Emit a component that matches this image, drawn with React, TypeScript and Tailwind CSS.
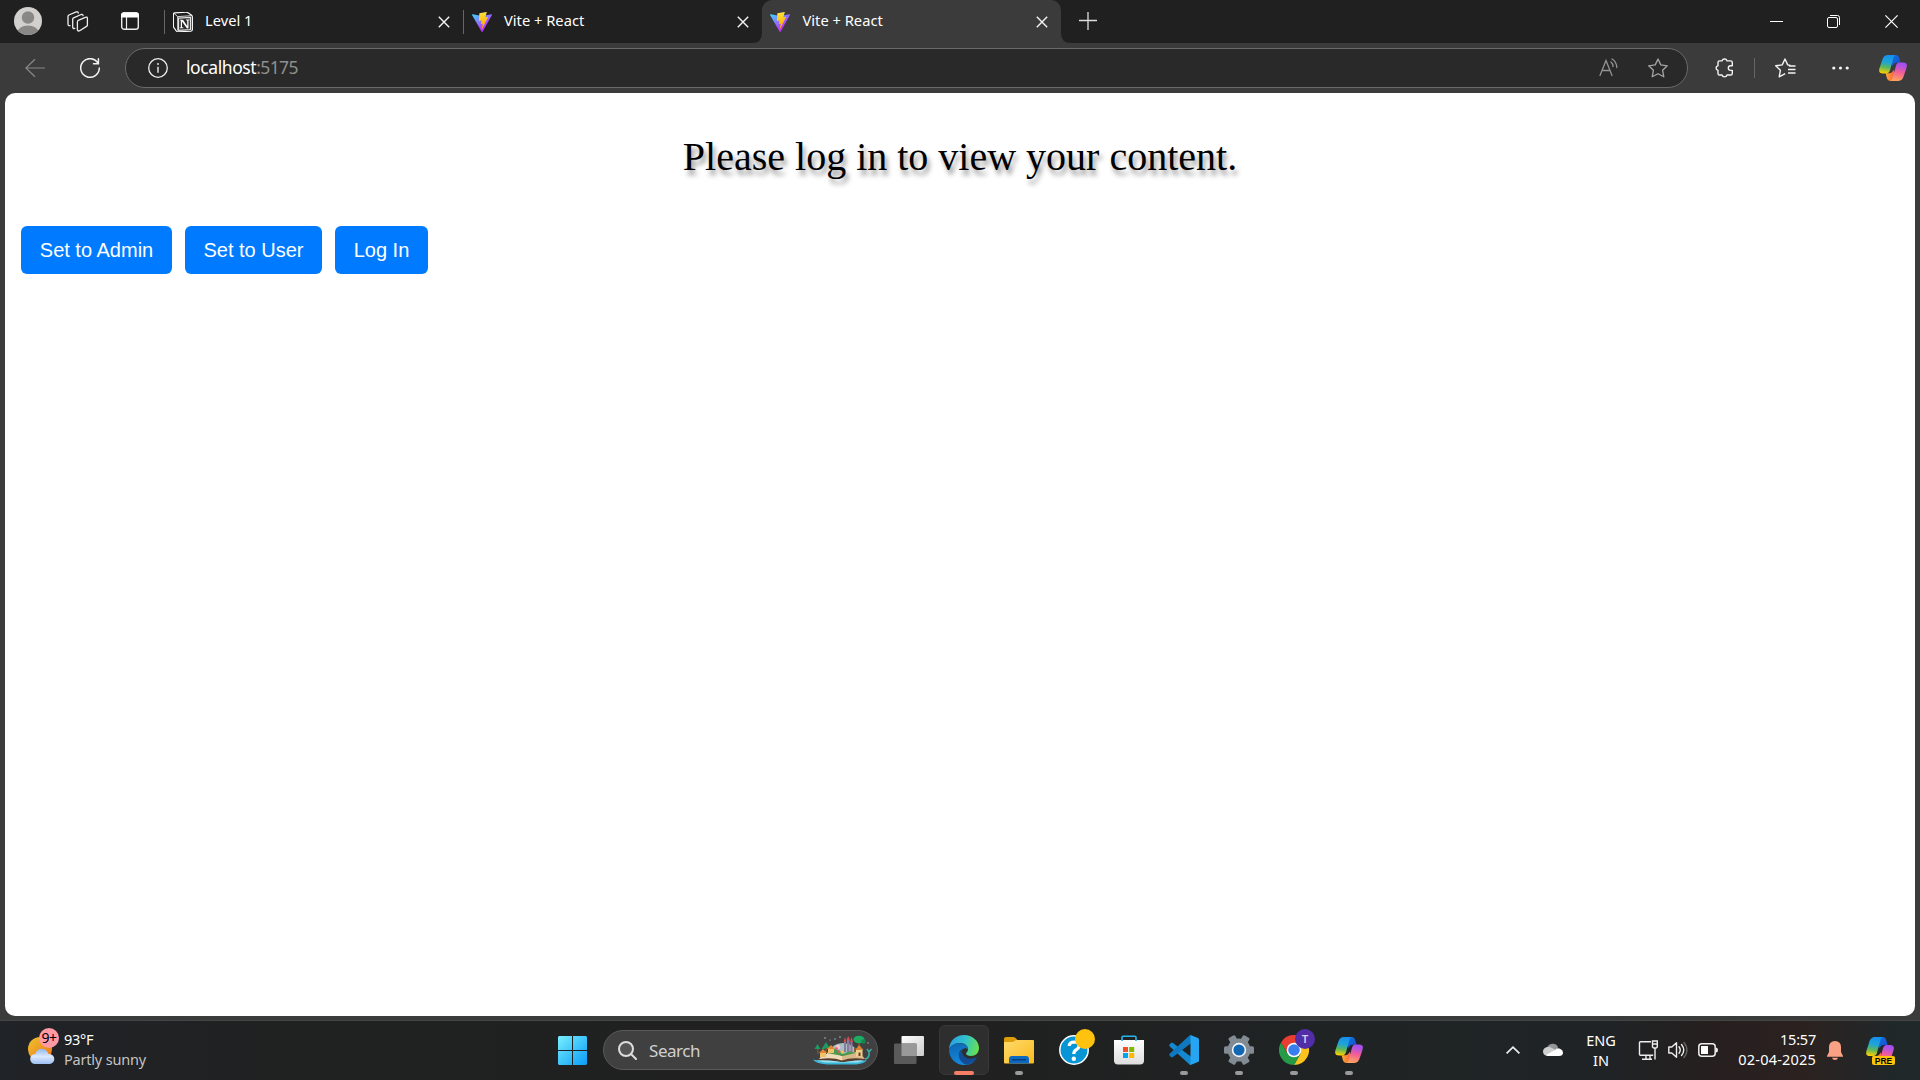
import React from "react";

const UI = "font-['Noto_Sans','Open_Sans',sans-serif]";

function ViteLogo({ id }: { id: string }) {
  return (
    <svg className="block h-5 w-5 shrink-0" viewBox="0 0 256 257" preserveAspectRatio="none">
      <defs>
        <linearGradient id={`${id}a`} x1="-.828%" x2="57.636%" y1="7.652%" y2="78.411%">
          <stop offset="0%" stopColor="#41D1FF" />
          <stop offset="100%" stopColor="#BD34FE" />
        </linearGradient>
        <linearGradient id={`${id}b`} x1="43.376%" x2="50.316%" y1="2.242%" y2="89.03%">
          <stop offset="0%" stopColor="#FFEA83" />
          <stop offset="8.333%" stopColor="#FFDD35" />
          <stop offset="100%" stopColor="#FFA800" />
        </linearGradient>
      </defs>
      <path fill={`url(#${id}a)`} d="M255.153 37.938 134.897 252.976c-2.483 4.44-8.862 4.466-11.382.048L.875 37.958c-2.746-4.814 1.371-10.646 6.827-9.67l120.385 21.517a6.537 6.537 0 0 0 2.322-.004l117.867-21.483c5.438-.991 9.574 4.796 6.877 9.62Z" />
      <path fill={`url(#${id}b)`} d="M185.432.063 96.44 17.501a3.268 3.268 0 0 0-2.634 3.014l-5.474 92.456a3.268 3.268 0 0 0 3.997 3.378l24.777-5.718c2.318-.535 4.413 1.507 3.936 3.838l-7.361 36.047c-.495 2.426 1.782 4.5 4.151 3.78l15.304-4.649c2.372-.72 4.652 1.36 4.15 3.788l-11.698 56.621c-.732 3.542 3.979 5.473 5.943 2.437l1.313-2.028 72.516-144.72c1.215-2.423-.88-5.186-3.54-4.672l-25.505 4.922c-2.396.462-4.435-1.77-3.759-4.114l16.646-57.705c.677-2.35-1.37-4.583-3.769-4.113Z" />
    </svg>
  );
}

function Copilot({ id, className }: { id: string; className: string }) {
  return (
    <svg className={className} viewBox="0 0 28 26" preserveAspectRatio="none">
      <defs>
        <linearGradient id={`${id}l`} x1="0.55" y1="0" x2="0.4" y2="1">
          <stop offset="0" stopColor="#1590ee" />
          <stop offset=".4" stopColor="#1fa5d6" />
          <stop offset=".68" stopColor="#5cb85a" />
          <stop offset="1" stopColor="#ffd000" />
        </linearGradient>
        <linearGradient id={`${id}r`} x1="0.6" y1="0" x2="0.4" y2="1">
          <stop offset="0" stopColor="#a64df0" />
          <stop offset=".2" stopColor="#b453dd" />
          <stop offset=".5" stopColor="#f25c98" />
          <stop offset="1" stopColor="#ffa45e" />
        </linearGradient>
        <linearGradient id={`${id}t`} x1="0" y1="0" x2="1" y2="1">
          <stop offset="0" stopColor="#0b7be0" />
          <stop offset="1" stopColor="#1c48cf" />
        </linearGradient>
        <linearGradient id={`${id}b`} x1="0" y1="0" x2="1" y2="0">
          <stop offset="0" stopColor="#ffab36" />
          <stop offset="1" stopColor="#ee4a3e" />
        </linearGradient>
      </defs>
      <path fill={`url(#${id}t)`} d="M9 0h7.6c2 0 3 1.1 3.6 3l1.3 4.7h-3.4c-2.7 0-3.8 1.2-4.4 3.4L9 0Z" />
      <path fill={`url(#${id}b)`} d="M19 26h-7.500c-2.100 0-3.200-1.200-3.700-3.200L6.600 18.300h3.300c2.600 0 3.700-1.200 4.500-3.600L19 26Z" />
      <path fill={`url(#${id}l)`} d="M16.500 0H8.600C5.600 0 4 2.200 2.900 6L.7 12.500C-.7 16.800.500 18.400 4 18.400h3.300c2 0 3.100-1.200 3.700-3.200l3.200-11.300C14.700 2 15.100.500 16.500 0Z" />
      <path fill={`url(#${id}r)`} d="M11.600 26h7.800c3 0 4.600-2.200 5.700-6l2.200-6.500c1.400-4.300.2-5.900-3.300-5.900h-3.300c-2 0-3.100 1.200-3.700 3.200l-3.200 11.300c-.500 1.900-.900 3.400-2.200 3.900Z" />
    </svg>
  );
}

function Close({ className }: { className: string }) {
  return (
    <svg className={className} viewBox="0 0 12 12" fill="none" stroke="#f5f5f5" strokeWidth="1.4">
      <path d="m.8.8 10.400 10.400M11.200.8.8 11.200" />
    </svg>
  );
}

function TabStrip() {
  return (
    <header className={`flex h-[43px] items-start bg-[#202020] text-white ${UI}`}>
      <svg className="mt-[7px] ml-3.5 h-7 w-7 shrink-0" viewBox="0 0 28 28">
        <defs><clipPath id="av"><circle cx="14" cy="14" r="14" /></clipPath></defs>
        <circle cx="14" cy="14" r="14" fill="#d2d0ce" />
        <g clipPath="url(#av)" fill="#8a8886"><circle cx="14" cy="10.500" r="6.200" /><ellipse cx="14" cy="25.500" rx="10.500" ry="7" /></g>
      </svg>
      <svg className="mt-[11px] ml-[25px] h-[21px] w-[22px] shrink-0" viewBox="0 0 22 21" fill="none" stroke="#eee" strokeWidth="1.3" strokeLinejoin="round" strokeLinecap="round">
        <path d="M11.300 9.300 18.300 6.300q2-.7 2.100 1v6.600q0 1-.9 1.500l-6.800 4.300q-2.200.900-2.300-.9v-7.900q0-1 .9-1.600Z" />
        <path d="M7.800 17.400q-2 .5-2.100-1.200V8.300q0-1 .9-1.500l7.500-3.300q1.800-.5 2 1.200" />
        <path d="M3 14.600q-1.900.3-2-1.300V5.500q0-1 .9-1.500l7.300-3.100q1.700-.5 2.100 1.100" />
      </svg>
      <svg className="mt-3 ml-8 h-[18px] w-[18px] shrink-0" viewBox="0 0 18 18">
        <rect x=".7" y=".9" width="16.600" height="16.400" rx="2.600" fill="none" stroke="#eee" strokeWidth="1.400" />
        <path d="M0 3.500Q0 .2 3 .2h12q3 0 3 3.300v2H0Z" fill="#fff" />
        <path d="M5.500 5v12" stroke="#eee" strokeWidth="1.200" />
      </svg>
      <div className="mt-2.5 ml-[25px] h-6 w-px shrink-0 bg-[#666]" />
      <div className="flex w-[298px] shrink-0 items-start">
        <svg className="mt-3 ml-2 h-5 w-5 shrink-0" viewBox="0 0 20 20">
          <path d="M1.700.9 13 .3q1.400-.1 2.400.7l3.200 2.300q.8.600.8 1.600v12.600q0 1.500-1.500 1.700l-12.800.6q-1 0-1.700-.7L.9 15.600q-.5-.7-.5-1.500V2.300Q.4 1 1.700.9Z" fill="#202020" stroke="#fff" strokeWidth="1.100" />
          <path d="m1 1.400 3.700 3.200v14M4.700 4.600l14-.9" fill="none" stroke="#fff" strokeWidth=".8" />
          <path d="m5.500 6.100 12-.7v12.200l-12 .7Z" fill="#2a2a2a" stroke="#e4e4e4" strokeWidth="1.300" />
          <path d="M7 7.700h3l4.200 6.300V8.500l-1.200-.3v-.7h3.500v.7l-1 .3v7.700l-1.500.2L9 9.500v5.800l1.400.3v.7H6.800v-.7l1-.3V8.600L7 8.400Z" fill="#fff" />
        </svg>
        <span className="mt-2 ml-[12px] w-[233px] text-[14.700px] leading-6 whitespace-nowrap">Level 1</span>
        <Close className="mt-4 h-3 w-3 shrink-0" />
      </div>
      <div className="mt-2.5 h-6 w-px shrink-0 bg-[#666]" />
      <div className="relative flex h-[43px] w-[298px] shrink-0 items-start">
        <div className="mt-3 ml-2"><ViteLogo id="v1" /></div>
        <span className="mt-2 ml-[12px] w-[233px] text-[14.700px] leading-6 whitespace-nowrap">Vite + React</span>
        <Close className="mt-4 h-3 w-3 shrink-0" />
        <svg className="absolute right-0 bottom-0 h-2.5 w-2.5" viewBox="0 0 10 10"><path d="M10 0v10H0Q10 10 10 0Z" fill="#3b3b3b" /></svg>
      </div>
      <div className="flex h-[43px] w-[299px] shrink-0 items-start rounded-t-[10px] bg-[#3b3b3b]">
        <div className="mt-3 ml-2"><ViteLogo id="v2" /></div>
        <span className="mt-2 ml-[12.500px] w-[233.500px] text-[14.700px] leading-6 whitespace-nowrap">Vite + React</span>
        <Close className="mt-4 h-3 w-3 shrink-0" />
      </div>
      <svg className="h-2.5 w-2.5 shrink-0 self-end" viewBox="0 0 10 10"><path d="M0 0v10h10Q0 10 0 0Z" fill="#3b3b3b" /></svg>
      <svg className="mt-3 ml-2 h-[18px] w-[18px] shrink-0" viewBox="0 0 18 18" stroke="#ddd" strokeWidth="1.300"><path d="M9 0v18M0 8.500h18" /></svg>
      <svg className="mt-[21px] ml-auto h-px w-[13px]" viewBox="0 0 13 1"><path d="M0 .5h13" stroke="#fff" /></svg>
      <svg className="mt-[15px] ml-11 h-[13px] w-[13px]" viewBox="0 0 13 13" fill="none" stroke="#fff"><rect x=".5" y="2.500" width="10" height="10" rx="1.500" /><path d="M3 .5h7.500q2 0 2 2V10" /></svg>
      <svg className="mt-[15px] mr-[22px] ml-[45px] h-[13px] w-[13px]" viewBox="0 0 13 13" stroke="#fff" strokeWidth="1.200"><path d="m.4.4 12.200 12.200M12.600.4.4 12.600" /></svg>
    </header>
  );
}

function Toolbar() {
  return (
    <div className={`flex h-[50px] items-center bg-[#3b3b3b] ${UI}`}>
      <svg className="-mt-px ml-[25px] h-5 w-5 shrink-0" viewBox="0 0 20 20" fill="none" stroke="#888" strokeWidth="1.200"><path d="M20 10H.9M10 1.200.9 10l9.100 8.800" /></svg>
      <svg className="ml-[35px] h-5 w-5 shrink-0" viewBox="0 0 20 20" fill="none" stroke="#f3f3f3" strokeWidth="1.500" strokeLinecap="round"><path d="M13.500 5.700h4.900V.8M18 5.200A9.300 9.300 0 1 0 19.300 10" /></svg>
      <div className="ml-[25px] flex h-10 w-[1563px] shrink-0 items-center rounded-full border border-[#6a6a6a] bg-[#292929]">
        <svg className="ml-[22px] h-5 w-5 shrink-0" viewBox="0 0 20 20" fill="none" stroke="#eee" strokeWidth="1.300"><circle cx="10" cy="10" r="9.300" /><path d="M10 8.700v6" strokeWidth="1.400" /><circle cx="10" cy="6" r=".9" fill="#eee" stroke="none" /></svg>
        <span className="ml-[18px] -mt-[3px] text-[17.500px] leading-6 tracking-[-0.42px] whitespace-nowrap text-white">localhost<span className="tracking-[-0.6px] text-[#8f8f8f]">:5175</span></span>
        <svg className="ml-auto h-5 w-5 shrink-0" viewBox="0 0 20 20" fill="none" stroke="#939393" strokeWidth="1.300" strokeLinecap="round"><path d="m1 17.500 6-15 6 15M3 12.500h8M12 4q2 1.500 2 4.500M13 1q4.500 2.500 4.800 8.500" /></svg>
        <svg className="mr-[19px] ml-[29px] h-5 w-5 shrink-0" viewBox="0 0 20 20" fill="none" stroke="#a5a5a5" strokeWidth="1.300" strokeLinejoin="round"><path d="m10 1 2.800 5.900 6.500.9-4.700 4.500 1.200 6.500-5.800-3.100-5.800 3.100 1.200-6.500L.7 7.800l6.500-.9Z" /></svg>
      </div>
      <svg className="ml-[27px] h-5 w-[19px] shrink-0" viewBox="0 0 19 20" fill="none" stroke="#f3f3f3" strokeWidth="1.400" strokeLinejoin="round"><path d="M7 2.900a2.600 2.600 0 0 1 5 0h3.700q1.600 0 1.600 1.600v3.300h-1.700a2.300 2.300 0 0 0 0 4.600h1.700v3q0 1.600-1.600 1.600H12a2.600 2.600 0 0 1-5 0H4.500Q3 17 3 15.400v-3a2.400 2.400 0 0 1 0-4.700V4.500q0-1.600 1.500-1.600Z" /></svg>
      <div className="ml-[20px] h-5 w-px shrink-0 bg-[#666]" />
      <svg className="ml-[20px] h-5 w-[21px] shrink-0" viewBox="0 0 21 20" fill="none" stroke="#f3f3f3" strokeWidth="1.400" strokeLinejoin="round"><path d="M15.500 7.500 12.700 6.900 10 1 7.200 6.900l-6.500.9 4.700 4.500-1.200 6.500 6-3.200M14 8h6.500M13 11.500h7.500M13 15h7.500" /></svg>
      <svg className="ml-9 h-1 w-[17px] shrink-0" viewBox="0 0 17 4" fill="#f3f3f3"><circle cx="1.800" cy="2" r="1.600" /><circle cx="8.500" cy="2" r="1.600" /><circle cx="15.200" cy="2" r="1.600" /></svg>
      <Copilot id="c1" className="ml-[30px] h-[26px] w-7 shrink-0" />
    </div>
  );
}

function Page() {
  const btn = "h-12 rounded-[6px] bg-[#007bff] font-['Liberation_Sans',Arial,sans-serif] text-[20px] leading-none text-white";
  return (
    <main className="mx-[5px] h-[923px] rounded-[10px] bg-white">
      <h1 className="pt-[41px] text-center font-['Liberation_Serif',serif] text-[40px] leading-[46px] font-normal text-black [text-shadow:2.5px_5px_5px_rgba(0,0,0,0.42)]">
        Please log in to view your content.
      </h1>
      <div className="mt-[46px] ml-4 flex gap-[13px]">
        <button className={`${btn} w-[151px]`}>Set to Admin</button>
        <button className={`${btn} w-[137px]`}>Set to User</button>
        <button className={`${btn} w-[93px]`}>Log In</button>
      </div>
    </main>
  );
}

function AppSlot({ children, state }: { children: React.ReactNode; state?: "active" | "open" }) {
  return (
    <div className={`relative flex h-[50px] w-[50px] shrink-0 items-center justify-center ${state === "active" ? "rounded-md border border-[#383838] bg-[#2e2e2e]" : ""}`}>
      {children}
      {state === "active" && <div className="absolute -bottom-px h-1 w-5 rounded-full bg-[#f47f66]" />}
      {state === "open" && <div className="absolute bottom-0 h-1 w-2 rounded-full bg-[#9a9a9a]" />}
    </div>
  );
}

function StoryBook() {
  return (
    <svg className="h-[30px] w-[60px] shrink-0" viewBox="0 0 60 30">
      <path d="M0 24.500q8 2 30 2T54 24.500q-1 4-11 5H14Q2 28.500 0 24.500Z" fill="#39b6d9" />
      <path d="M3 25.500q10-1 22 1h10q12-2 16-1l-6 2H12Z" fill="#9de3ef" />
      <path d="M16 18q3-10 14-10t15 10q-8 0-15 2-7-3-14-2Z" fill="#a9bfc6" />
      <path d="m10 19-5 6q14-1 23 2h3q10-3 21-2l-5-6q-10-1-18 3-8-4-19-3Z" fill="#5b3c2c" />
      <path d="m11 18-5 6q14-2 23 1.500V21q-8-4-18-3Z" fill="#f0dcb8" />
      <path d="m47 18 5 6q-14-2-23 1.500V21q8-4 18-3Z" fill="#d9b98b" />
      <path d="M14 18q3-5 8-4t8 5l7-3 6 2-13 3Z" fill="#4c9a4e" />
      <path d="M31 7h2v10h-2zM34 5h2.500v12H34zM37.500 7h2v10h-2z" fill="#8c7a9c" />
      <path d="m30.500 7 1.500-5 1.500 5ZM33.500 5l1.700-4 1.800 4ZM37 7l1.500-5L40 7Z" fill="#d64a55" />
      <path d="m1.500 14 3-5 3 5ZM8.500 14l4.500-7 4.500 7Z" fill="#1c9a62" /><path d="M4 14h1.500v5H4zM12 13h2v6h-2z" fill="#785037" />
      <path d="M45 6h2v7h-2z" fill="#7a4d2d" /><ellipse cx="46" cy="4.500" rx="5.500" ry="3.800" fill="#1faa63" /><circle cx="50.500" cy="6.500" r="2.200" fill="#14864f" />
      <path d="M43 14h6.500v7.500H43z" fill="#efcf8c" /><path d="m42 15 4.200-5 4.300 5Z" fill="#d78438" /><path d="M45.500 17.500h2V21h-2z" fill="#6e3d23" />
      <path d="M7 18h6v4H7zM15 14h6v4h-6z" fill="#f0c269" /><path d="m6 18 4-4 4 4ZM14 14l4-4 4 4Z" fill="#df8a35" />
      <path d="M41 13h2v4h-2z" fill="#8c5b30" />
      <circle cx="25" cy="12" r="2.300" fill="#f7c7d0" /><circle cx="23.500" cy="13.500" r="1.300" fill="#e65a78" /><circle cx="29" cy="17" r="1.500" fill="#f4c64f" /><circle cx="26" cy="16.500" r="1.200" fill="#e65a68" />
      <path d="M52 24q5-1 4-7m-2-3 2 3 2.500-3" fill="none" stroke="#35b1a9" strokeWidth="1.500" />
      <g fill="#9bc3d1"><circle cx="12" cy="3" r=".8" /><circle cx="17" cy="5" r=".6" /><circle cx="22" cy="4" r=".7" /><circle cx="27" cy="2" r=".8" /><circle cx="55" cy="8" r=".7" /></g>
    </svg>
  );
}

function Gear() {
  return (
    <svg className="h-[30px] w-[30px]" viewBox="0 0 30 30">
      <g fill="#828b93">
        <circle cx="15" cy="15" r="11.500" />
        <rect x="0" y="11.200" width="30" height="7.600" rx="1.600" />
        <rect x="-.5" y="11.200" width="31" height="7.600" rx="1.600" transform="rotate(60 15 15)" />
        <rect x="-.5" y="11.200" width="31" height="7.600" rx="1.600" transform="rotate(120 15 15)" />
      </g>
      <circle cx="15" cy="15" r="7.200" fill="#f4f6f8" /><circle cx="15" cy="15" r="5.600" fill="#1068b5" />
    </svg>
  );
}

function Taskbar() {
  return (
    <footer className={`flex h-[59px] items-start bg-[linear-gradient(90deg,#202327_0%,#202121_14%,#202020_50%,#1f2425_76%,#1f2325_84%,#261f1f_89%,#2b2220_94%,#20282a_99%)] text-white ${UI}`}>
      <div className="relative mt-4 ml-7 h-7 w-7 shrink-0">
        <svg className="h-7 w-7" viewBox="0 0 28 28">
          <defs><linearGradient id="sun" x1="0" y1="0" x2="1" y2="1"><stop stopColor="#ecc331" /><stop offset="1" stopColor="#f27314" /></linearGradient><linearGradient id="cl" x1="0" y1="0" x2="0" y2="1"><stop stopColor="#8fb8f0" /><stop offset=".5" stopColor="#dce9fd" /><stop offset="1" stopColor="#9dbff2" /></linearGradient></defs>
          <circle cx="12" cy="12" r="12" fill="url(#sun)" /><path d="M7 27a5 5 0 0 1 .4-10q2-6 7.600-5 4 .8 5.500 5a5 5 0 1 1 1.500 10Z" fill="url(#cl)" />
        </svg>
        <div className="absolute -top-[9px] left-[11px] flex h-5 w-5 items-center justify-center rounded-full bg-[#ff99a4] text-[14px] leading-none tracking-[-0.4px] text-black">9+</div>
      </div>
      <div className="mt-2 ml-2 w-[494px] shrink-0 text-[14.500px] leading-5 whitespace-nowrap"><div className="tracking-[-0.3px]">93°F</div><div className="tracking-[-0.2px] text-[#c4c4c4]">Partly sunny</div></div>
      <svg className="mt-[15px] h-[29px] w-[29px] shrink-0" viewBox="0 0 29 29"><defs><linearGradient id="win" gradientUnits="userSpaceOnUse" x1="0" y1="0" x2="29" y2="29"><stop stopColor="#76effd" /><stop offset="1" stopColor="#0a9cf8" /></linearGradient></defs><path d="M1 0h13v14H0V1ZM15 0h13l1 1v13H15ZM0 15h14v14H1l-1-1ZM15 15h14v13l-1 1H15Z" fill="url(#win)" /></svg>
      <div className="mt-[9px] ml-4 flex h-10 w-[275px] shrink-0 items-center rounded-full border border-[#595959] bg-[#404040]">
        <svg className="ml-3.5 h-[19px] w-[19px] shrink-0" viewBox="0 0 19 19" fill="none" stroke="#ddd" strokeWidth="2"><circle cx="8" cy="8" r="7" fill="#555" /><path d="m13 13 5 5" strokeLinecap="round" /></svg>
        <span className="mt-px ml-3 text-[17px] leading-6 tracking-[-0.45px] text-[#d0d0d0]">Search</span>
        <div className="mr-[4px] ml-auto"><StoryBook /></div>
      </div>
      <div className="mt-1 ml-[6px] flex gap-[5px]">
        <AppSlot><svg className="h-7 w-[30px]" viewBox="0 0 30 28"><defs><linearGradient id="tv" x1="0" y1="0" x2="1" y2="1"><stop stopColor="#fff" /><stop offset="1" stopColor="#ccc" /></linearGradient></defs><rect x="7.500" width="22.500" height="20" rx="1" fill="url(#tv)" /><rect y="7.500" width="22.500" height="20.500" rx="1" fill="#5a5a5a" /><path d="M7.500 7.500h15V20h-15Z" fill="#999" /></svg></AppSlot>
        <AppSlot state="active">
          <svg className="h-[30px] w-[30px]" viewBox="0 0 30 30">
            <defs><linearGradient id="e1" x1="0" y1=".3" x2="1" y2=".5"><stop stopColor="#2b9de0" /><stop offset=".5" stopColor="#2fc2cf" /><stop offset="1" stopColor="#68e04e" /></linearGradient><linearGradient id="e2" x1=".2" y1="0" x2=".6" y2="1"><stop stopColor="#0d69b5" /><stop offset="1" stopColor="#168be0" /></linearGradient></defs>
            <path d="M0 14C.5 5.500 7 0 15 0c8.500 0 15 6 15 13 0 5-3.500 8-8 8-3 0-5-1-5-2.500 0-1 2-1.500 2-4.500 0-3-3-6-8-6C6 8 1.500 11 0 14Z" fill="url(#e1)" />
            <path d="M0 14.500C2 10 6 8.300 10.500 8.300c5 0 8.500 2.700 8.500 6.200-2-2.500-7-1.500-7 3.500 0 5 4 9 9 9 2 0 3.500-.5 4.500-1C22.500 29 19 30 15 30 6.500 30 0 23 0 14.500Z" fill="url(#e2)" />
            <path d="M12.700 14C8 17 8.500 26 17 29.800c4-.4 8.500-3 10.700-6.600.4-.8-.2-.9-.8-.6C20 26 12 22 12.700 14Z" fill="#124c96" />
          </svg>
        </AppSlot>
        <AppSlot state="open"><svg className="h-[27px] w-[30px]" viewBox="0 0 30 27"><defs><linearGradient id="fo" x1="0" y1="0" x2="1" y2="1"><stop stopColor="#ffdb6b" /><stop offset="1" stopColor="#f9b91e" /></linearGradient></defs><path d="M0 2Q0 0 2 0h7q1.500 0 2.500 1L14 3.500V9H0Z" fill="#dd9d08" /><path d="M0 5h9l3-2h17q1 0 1 1v21.500q0 1-1 1H1q-1 0-1-1Z" fill="url(#fo)" /><path d="M5 26.500V22q0-3 3-3h14q3 0 3 3v4.500Z" fill="#0c69c0" /><path d="M8.500 22.800h13" stroke="#063f80" strokeWidth="1.500" strokeLinecap="round" /></svg></AppSlot>
        <AppSlot><svg className="h-[30px] w-[30px]" viewBox="0 0 30 30"><circle cx="15" cy="15" r="14.200" fill="#0795d6" stroke="#fff" strokeWidth="1.500" /><path d="M10.200 11q.3-4 5-4 5 .2 4.800 4.200-.2 2.200-2.600 3.500-2.600 1.500-2.600 4.300" fill="none" stroke="#fff" strokeWidth="3.200" /><circle cx="14.800" cy="23.800" r="2.200" fill="#fff" /></svg><div className="absolute top-1 left-[26px] h-5 w-5 rounded-full bg-[#ffc20e]" /></AppSlot>
        <AppSlot><svg className="h-[30px] w-[30px]" viewBox="0 0 30 30"><defs><linearGradient id="st" x1="0" y1="0" x2="0" y2="1"><stop stopColor="#fff" /><stop offset="1" stopColor="#ddd" /></linearGradient></defs><path d="M0 5h30v20.500q0 4-4 4H4q-4 0-4-4Z" fill="url(#st)" /><path d="M8 6V2.300Q8 1.200 9.200 1.200h11.600q1.200 0 1.200 1.100V6" fill="none" stroke="#27b5ed" strokeWidth="1.600" /><path d="M9 12h5v5H9z" fill="#f25022" /><path d="M15.200 12h5v5h-5z" fill="#7fba00" /><path d="M9 18h5v5H9z" fill="#00a4ef" /><path d="M15.200 18h5v5h-5z" fill="#ffb900" /></svg></AppSlot>
        <AppSlot state="open"><svg className="h-[30px] w-[30px]" viewBox="0 0 30 30"><path d="M22 30q-1 0-1.500-.5L.8 11.500Q-.3 10.300.8 9.200L2 8q1-.8 2 0l18 13.700Z" fill="#1489d1" /><path d="M22 0q-1 0-1.500.5L.8 18.500q-1.100 1.200 0 2.300L2 22q1 .8 2 0L22 8.300Z" fill="#0f78c0" /><path d="m21.500 0 7.500 3q1 .5 1 1.500v21q0 1-1 1.500l-7.500 3Z" fill="#26a5f2" /></svg></AppSlot>
        <AppSlot state="open"><Gear /></AppSlot>
        <AppSlot state="open"><svg className="h-[30px] w-[30px]" viewBox="0 0 30 30"><path d="M2 7.500A15 15 0 0 1 28 7.500H15L8.500 18.800Z" fill="#e93d32" /><path d="M28 7.500A15 15 0 0 1 15 30l6.500-11.300L15 7.500Z" fill="#fcc31e" /><path d="M2 7.500A15 15 0 0 0 15 30l6.500-11.200-13 0Z" fill="#259b48" /><circle cx="15" cy="15" r="7.300" fill="#fff" /><circle cx="15" cy="15" r="5.800" fill="#397ef0" /></svg><div className="absolute top-1 left-[26px] flex h-5 w-5 items-center justify-center rounded-full bg-[#512da8] text-[11.500px] leading-none font-semibold text-[#d5c8f2]">T</div></AppSlot>
        <AppSlot state="open"><Copilot id="c2" className="h-[26px] w-7" /></AppSlot>
      </div>
      <svg className="mt-[25px] ml-[132px] h-2 w-3.5 shrink-0" viewBox="0 0 14 8" fill="none" stroke="#eee" strokeWidth="1.700"><path d="m.6 7.400 6.400-6.200 6.400 6.200" /></svg>
      <svg className="mt-[22px] ml-[23px] h-[13px] w-5 shrink-0" viewBox="0 0 20 13"><path d="M4 5a6 6 0 0 1 11-1l-2 4H3Z" fill="#969696" /><path d="M4 4q3-.5 5 1l5 3-8 5H4Q0 12 0 8.500T4 4Z" fill="#cfcfcf" /><path d="m3 12 9-5q2-2.500 5-1.300 3 1.300 3 3.800 0 3.500-4 3.500H5Z" fill="#fff" /></svg>
      <div className="mt-[9px] ml-[22px] w-8 shrink-0 text-center text-[14.500px] leading-5"><div>ENG</div><div>IN</div></div>
      <svg className="mt-[19px] ml-[21px] h-5 w-5 shrink-0" viewBox="0 0 20 20" fill="none" stroke="#eee" strokeWidth="1.400"><path d="M13 1.700H2.500q-1 0-1 1v11.600q0 1 1 1h12.700M8 15.300v4M12 15.300v4M4 19.300h10M14.500 1h4.800v6l-1.200 1h-2.400l-1.200-1ZM14.500 4h4.800M17 8v11.500" /></svg>
      <svg className="mt-[20px] ml-2.5 h-[18px] w-5 shrink-0" viewBox="0 0 20 18" fill="none" stroke="#eee" strokeWidth="1.400" strokeLinejoin="round"><path d="M.8 6h3l4.700-4.200v14.400L3.800 12h-3Z" /><path d="M11 5.800q2.500 3.200 0 6.400M13.500 3.500q4.500 5.500 0 11" strokeLinecap="round" /><path d="M16 1.500q6 7.500 0 15" stroke="#666" strokeLinecap="round" /></svg>
      <svg className="mt-[22px] ml-2.5 h-[14px] w-5 shrink-0" viewBox="0 0 20 14"><rect x=".8" y=".8" width="16.400" height="12.400" rx="3" fill="none" stroke="#eee" strokeWidth="1.500" /><path d="M3 3h7v8H3z" fill="#fff" /><path d="M18 4.500q2 0 2 2.500t-2 2.500Z" fill="#eee" /></svg>
      <div className="mt-2 ml-[8px] w-[90px] shrink-0 text-right text-[14.500px] leading-5 tracking-[-0.2px] whitespace-nowrap"><div>15:57</div><div className="tracking-[0.2px]">02-04-2025</div></div>
      <svg className="mt-5 ml-[11px] h-[19px] w-4 shrink-0" viewBox="0 0 16 19"><path d="M8 0q6 .3 6 6v5l2 4v.8H0V15l2-4V6Q2 .3 8 0ZM5 16.800h6Q10.500 19 8 19t-3-2.200Z" fill="#f9a184" /></svg>
      <div className="relative mt-4 ml-[23px] h-7 w-[29px] shrink-0">
        <Copilot id="c3" className="h-[27px] w-7" />
        <div className="absolute right-0 bottom-0 flex h-[9px] w-[23px] items-center justify-center rounded-[2px] bg-[#ffc40a] pt-px font-['Liberation_Sans',sans-serif] text-[8.500px] leading-none font-bold text-black">PRE</div>
      </div>
    </footer>
  );
}

export default function App() {
  return (
    <div className="h-[1080px] w-[1920px] overflow-hidden bg-[#3b3b3b]">
      <TabStrip />
      <Toolbar />
      <Page />
      <div className="h-[5px] border-b border-[#454545] bg-[#3a3c3b]" />
      <Taskbar />
    </div>
  );
}
